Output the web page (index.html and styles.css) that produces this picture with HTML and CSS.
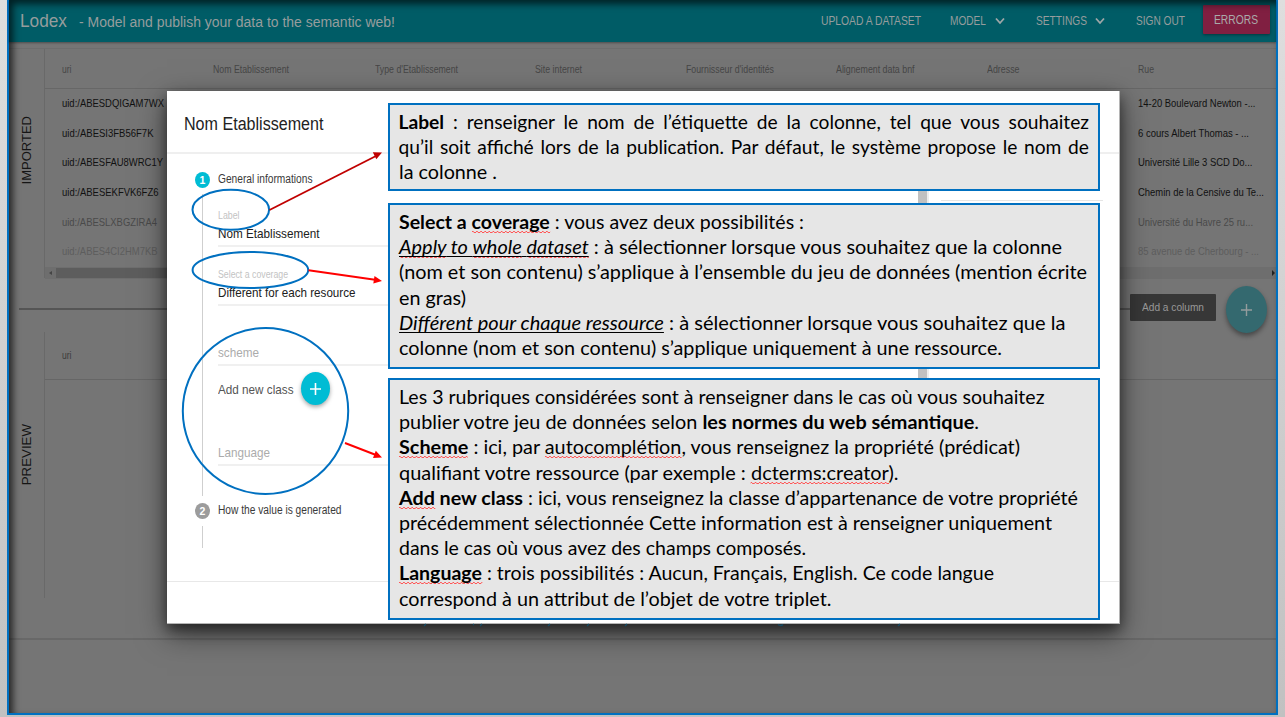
FILE: index.html
```html
<!DOCTYPE html>
<html lang="fr">
<head>
<meta charset="utf-8">
<title>Lodex</title>
<link rel="stylesheet" href="styles.css">
</head>
<body>
<div class="slide">
<div class="frame">
  <header class="topbar">
    <span class="brand"><span data-w="47">Lodex</span></span>
    <span class="tagline"><span data-w="316">- Model and publish your data to the semantic web!</span></span>
    <nav class="nav">
      <span class="nav-upload"><span data-w="100">UPLOAD A DATASET</span></span>
      <span class="nav-model"><span data-w="36">MODEL</span></span>
      <svg class="chevron chevron-model" viewBox="0 0 10 8"><path d="M1 1.5 5 6 9 1.5"/></svg>
      <span class="nav-settings"><span data-w="51">SETTINGS</span></span>
      <svg class="chevron chevron-settings" viewBox="0 0 10 8"><path d="M1 1.5 5 6 9 1.5"/></svg>
      <span class="nav-signout"><span data-w="49">SIGN OUT</span></span>
      <span class="errors"><span data-w="44">ERRORS</span></span>
    </nav>
  </header>
  <section class="imported">
    <div class="side"><span>IMPORTED</span></div>
    <div class="table">
      <div class="row head">
        <span><b data-w="9.5">uri</b></span><span><b data-w="76">Nom Etablissement</b></span><span><b data-w="83">Type d'Etablissement</b></span><span><b data-w="47">Site internet</b></span><span><b data-w="88">Fournisseur d'identités</b></span><span><b data-w="78.5">Alignement data bnf</b></span><span><b data-w="32.5">Adresse</b></span><span><b data-w="16">Rue</b></span>
      </div>
      <div class="row"><span><b data-w="102">uid:/ABESDQIGAM7WX</b></span><span class="last"><b data-w="117.5">14-20 Boulevard Newton -...</b></span></div>
      <div class="row"><span><b data-w="91.5">uid:/ABESI3FB56F7K</b></span><span class="last"><b data-w="111">6 cours Albert Thomas - ...</b></span></div>
      <div class="row"><span><b data-w="101">uid:/ABESFAU8WRC1Y</b></span><span class="last"><b data-w="114.5">Université Lille 3 SCD Do...</b></span></div>
      <div class="row"><span><b data-w="96.5">uid:/ABESEKFVK6FZ6</b></span><span class="last"><b data-w="126">Chemin de la Censive du Te...</b></span></div>
      <div class="row faded"><span><b data-w="95">uid:/ABESLXBGZIRA4</b></span><span class="last"><b data-w="115">Université du Havre 25 ru...</b></span></div>
      <div class="row fainter"><span><b data-w="95.5">uid:/ABES4CI2HM7KB</b></span><span class="last"><b data-w="121">85 avenue de Cherbourg - ...</b></span></div>
      <div class="hscroll"><i class="arrow-left"></i><i class="thumb"></i><i class="arrow-right"></i></div>
    </div>
  </section>
  <div class="separator"></div>
  <section class="preview">
    <div class="side"><span>PREVIEW</span></div>
    <div class="preview-head"><b data-w="9.5">uri</b></div>
  </section>
  <div class="footline"></div>
  <div class="inner-shadow"></div>
</div>

<div class="tooltip"><span data-w="62">Add a column</span></div>
<div class="fab fab-column"><svg viewBox="0 0 11 12"><path d="M5.5 0V12M0 6H11"/></svg></div>

<div class="modal">
  <h1><span data-w="139.5">Nom Etablissement</span></h1>
  <div class="modal-body">
    <div class="step first"><i class="badge">1</i><span data-w="94.5">General informations</span></div>
    <div class="fields">
      <div class="field f-label"><label><span data-w="21.5">Label</span></label><p><span data-w="101.5">Nom Etablissement</span></p></div>
      <div class="field f-cover"><label><span data-w="70">Select a coverage</span></label><p><span data-w="137.5">Different for each resource</span></p></div>
      <div class="field f-scheme"><span data-w="41">scheme</span></div>
      <div class="f-class"><span class="class-text"><span data-w="75.5">Add new class</span></span><div class="fab fab-class"><svg viewBox="0 0 11 12"><path d="M5.5 0V12M0 6H11"/></svg></div></div>
      <div class="field f-lang"><span data-w="52">Language</span></div>
    </div>
    <div class="step second"><i class="badge grey">2</i><span data-w="123.5">How the value is generated</span></div>
    <div class="tail"></div>
  </div>
  <div class="vscroll"></div>
  <div class="rightline"></div>
</div>

<svg class="marks" viewBox="0 0 1285 717">
  <g class="peek"><path d="M426 624l-2 2M474 624l-1 1M482 624l-2 2M550 624l-2 2M589 624l-2 2M627 624l-2 2M778 624.500q3 2 5 0M900 624l-2 2"/></g>
  <g class="rings"><ellipse cx="230.8" cy="209.8" rx="38.3" ry="20"/><ellipse cx="250.4" cy="270" rx="57.8" ry="18"/><ellipse cx="265.5" cy="411" rx="82.7" ry="83"/></g>
  <g class="dark"><path class="shaft" d="M269.500 210 376 156"/><path class="tip" d="M382 152.500 376.300 159.300 372.800 152.200z"/></g>
  <g class="bright"><path class="shaft" d="M308.500 270.200 375 279.800M345 443 376 455"/><path class="tip" d="M382 281 373.300 283.600 374.500 276zM382 457.500 373 458 375.800 450.800z"/></g>
</svg>

<div class="note note1">
  <div><span data-w="690.5" data-mode="justify"><strong>Label</strong> : renseigner le nom de l’étiquette de la colonne, tel que vous souhaitez</span></div>
  <div><span data-w="690.5" data-mode="justify">qu’il soit affiché lors de la publication. Par défaut, le système propose le nom de</span></div>
  <div><span data-w="98">la colonne .</span></div>
</div>
<div class="note note2">
  <div><span data-w="405"><strong>Select a <u class="sp">coverage</u></strong> : vous avez deux possibilités :</span></div>
  <div><span data-w="663"><em><u class="ul"><u class="sp">Apply</u> to <u class="sp">whole</u> <u class="sp">dataset</u></u></em> : à sélectionner lorsque vous souhaitez que la colonne</span></div>
  <div><span data-w="688">(nom et son contenu) s’applique à l’ensemble du jeu de données (mention écrite</span></div>
  <div><span data-w="67">en gras)</span></div>
  <div><span data-w="666.5"><em><u class="ul">Différent pour chaque ressource</u></em> : à sélectionner lorsque vous souhaitez que la</span></div>
  <div><span data-w="603">colonne (nom et son contenu) s’applique uniquement à une ressource.</span></div>
</div>
<div class="note note3">
  <div><span data-w="645.500">Les 3 rubriques considérées sont à renseigner dans le cas où vous souhaitez</span></div>
  <div><span data-w="580">publier votre jeu de données selon <strong>les normes du web sémantique</strong>.</span></div>
  <div><span data-w="621"><strong><u class="sp">Scheme</u></strong> : ici, par <u class="sp">autocomplétion</u>, vous renseignez la propriété (prédicat)</span></div>
  <div><span data-w="499.500">qualifiant votre ressource (par exemple : <u class="sp">dcterms:creator</u>).</span></div>
  <div><span data-w="679"><strong><u class="sp">Add</u> new class</strong> : ici, vous renseignez la classe d’appartenance de votre propriété</span></div>
  <div><span data-w="653">précédemment sélectionnée Cette information est à renseigner uniquement</span></div>
  <div><span data-w="407">dans le cas où vous avez des champs composés.</span></div>
  <div><span data-w="595"><strong><u class="sp">Language</u></strong> : trois possibilités : Aucun, Français, English. Ce code langue</span></div>
  <div><span data-w="432.500">correspond à un attribut de l’objet de votre triplet.</span></div>
</div>
</div>
<script src="fit.js"></script>
</body>
</html>
```
FILE: styles.css
```css
* { box-sizing: border-box; }
body { margin: 0; font-family: "Liberation Sans", Arial, sans-serif; }
b { font-weight: normal; }
i { font-style: normal; }
[data-w] { display: inline-block; white-space: pre; transform-origin: 0 50%; }

.slide { position: relative; width: 1285px; height: 717px; overflow: hidden; background: linear-gradient(#dedede, #c1c1c1); }
.frame { position: relative; width: 1271px; height: 715px; margin-left: 7px; border: solid #0070c0; border-width: 0 2px 2px; background: #757575; }
.inner-shadow { position: absolute; inset: 0; box-shadow: inset 4px 4px 7px rgba(0,0,0,.65); }

.topbar { display: flex; height: 42px; background: #005c66; color: #969c9d; box-shadow: 0 1px 2px rgba(0,0,0,.35); line-height: 42px; white-space: nowrap; }
.brand { width: 59px; margin-left: 11px; font-size: 18.500px; line-height: 41px; }
.tagline { width: 742px; font-size: 15.500px; line-height: 43px; }
.nav { display: flex; font-size: 12px; line-height: 42px; }
.nav-upload { width: 129px; }
.nav-model { width: 45px; }
.nav-settings { width: 59px; }
.nav-signout { width: 67px; }
.chevron { width: 10px; height: 8px; margin-top: 17px; fill: none; stroke: #9fa7a8; stroke-width: 1.800; }
.chevron-model { margin-right: 31px; }
.chevron-settings { margin-right: 31px; }
.errors { width: 67px; height: 29px; margin-top: 5px; padding-left: 11px; border-radius: 1px; background: #801f41; color: #aaa; line-height: 30px; box-shadow: 0 1px 3px rgba(0,0,0,.4); }

.imported { display: flex; height: 230px; margin-top: 6px; border-top: 1px solid #6e6e6e; }
.side { display: flex; align-items: center; justify-content: center; width: 36px; padding-right: 1px; border-right: 1px solid #696969; font-size: 13.300px; color: #151515; }
.side span { writing-mode: vertical-rl; transform: rotate(180deg); }
.imported .side { padding-top: 0; padding-bottom: 26px; font-size: 13px; }
.table { width: 1231px; }
.row { display: grid; grid-template-columns: 151px 161.500px 160px 151px 150.500px 151px 151px 1fr; height: 29.700px; padding-left: 17px; font-size: 11px; line-height: 29px; color: #111; white-space: nowrap; overflow: hidden; }
.row.head { height: 40px; border-bottom: 1px solid #676767; font-size: 10px; line-height: 41px; color: #464646; }
.row .last { grid-column: 8; }
.row.faded { color: #4a4a4a; }
.row.fainter { color: #5d5d5d; }
.hscroll { display: flex; align-items: center; height: 12px; background: #6e6e6e; }
.arrow-left { width: 11px; }
.arrow-left::before { content: ""; display: block; margin-left: 4px; width: 0; border: solid transparent; border-width: 2.500px 3px 2.500px 0; border-right-color: #444; }
.thumb { width: 700px; height: 10px; background: #5d5d5d; }
.arrow-right { margin-left: auto; margin-right: 1px; border: solid transparent; border-width: 3px 0 3px 3px; border-left-color: #222; }
.separator { width: 1190px; height: 2px; margin: 30px 0 0 10px; background: #555; }
.preview { display: flex; height: 266px; margin-top: 22px; }
.preview .side { padding-top: 0; padding-bottom: 20px; }
.preview-head { flex: 1; height: 48px; padding-left: 17px; border-bottom: 1px solid #666; font-size: 10px; line-height: 48px; color: #3c3c3c; }
.footline { height: 2px; margin-top: 40px; background: #686868; }

.tooltip { position: absolute; left: 1130px; top: 294px; width: 86px; height: 27px; padding-left: 12px; border-radius: 1px; background: #373737; color: #999; font-size: 11.500px; line-height: 27px; }
.fab { display: flex; align-items: center; justify-content: center; border-radius: 50%; }
.fab svg { fill: none; stroke: #fff; stroke-width: 1.600; }
.fab-column { position: absolute; left: 1226px; top: 286px; width: 41px; height: 47px; background: #34696f; box-shadow: 0 3px 5px rgba(0,0,0,.4); }
.fab-column svg { width: 11px; height: 12px; stroke: #949c9d; stroke-width: 1.400; }

.modal { position: absolute; left: 167px; top: 91px; width: 953px; height: 533px; border: solid #b5b5b5; border-width: 0 1px 1px 0; background: #fff; box-shadow: 0 10px 28px rgba(0,0,0,.5), 0 6px 12px rgba(0,0,0,.45); }
.modal h1 { height: 63px; margin: 0; padding-left: 17px; border-bottom: 2px solid #efefef; font-size: 17.500px; font-weight: normal; line-height: 67px; color: #222; }
.modal-body { height: 428px; padding: 17px 0 0 28px; border-bottom: 1px solid #e8e8e8; }
.step { display: flex; align-items: center; gap: 7.500px; height: 17px; font-size: 12px; line-height: 17px; color: #3a3a3a; }
.badge { flex: none; width: 15px; height: 16px; border-radius: 50%; background: #00bcd4; color: #fff; font-size: 10.500px; font-weight: bold; line-height: 16.500px; text-align: center; }
.badge.grey { background: #9c9c9c; }
.fields { height: 302px; margin: 6px 0 6px 7px; padding-left: 15px; border-left: 1px solid #cfcfcf; white-space: nowrap; }
.field { width: 680px; border-bottom: 2px solid #f0f0f0; }
.field label, .field p { display: block; margin: 0; }
.f-label { height: 53px; padding-top: 14px; }
.f-label label, .f-cover label { height: 16px; font-size: 10px; line-height: 16px; color: #c3c3c3; }
.f-label p, .f-cover p { height: 20px; font-size: 13px; line-height: 20px; color: #202020; }
.f-cover { height: 59px; padding-top: 20px; }
.f-cover p { line-height: 19px; }
.f-scheme { height: 60px; padding-top: 37px; font-size: 13.500px; line-height: 20px; color: #ababab; }
.f-class { display: flex; padding-top: 6px; height: 47px; }
.class-text { width: 83px; font-size: 13.500px; line-height: 35px; color: #555; }
.fab-class { width: 29px; height: 33px; background: #00bcd4; box-shadow: 0 2px 4px rgba(0,0,0,.35); }
.fab-class svg { width: 11px; height: 12px; }
.f-lang { height: 53px; padding-top: 30px; font-size: 13.500px; line-height: 20px; color: #ababab; }
.tail { width: 1px; height: 22px; margin: 7px 0 0 7px; background: #cfcfcf; }
.vscroll { position: absolute; left: 751px; top: 90px; width: 11px; height: 250px; border-right: 2px solid #eee; background: #c1c1c1; }
.rightline { position: absolute; left: 774px; top: 109px; width: 162px; height: 1px; background: #e6e6e6; }

.marks { position: absolute; left: 0; top: 0; width: 1285px; height: 717px; fill: none; }
.peek { stroke: #124b66; stroke-width: 1.300; }
.rings { stroke: #0070c0; stroke-width: 2; }
.shaft { stroke-width: 1.900; }
.dark { stroke: #c00000; }
.bright { stroke: #ff0000; }
.tip { stroke: none; }
.dark .tip { fill: #c00000; }
.bright .tip { fill: #ff0000; }

.note { position: absolute; left: 388px; width: 712px; padding: 4px 0 0 8.500px; border: 2px solid #0070c0; background: #e6e6e6; color: #000; font-family: Lato, Carlito, sans-serif; font-size: 19px; line-height: 25.200px; }
.note > div { height: 25.200px; }
.note1 { top: 103px; height: 88px; font-size: 19.200px; }
.note2 { top: 203px; height: 166px; }
.note3 { top: 378px; height: 242px; }
.note u { text-decoration: none; }
.note .ul { text-decoration: underline; text-decoration-thickness: 1px; text-underline-offset: 2px; text-decoration-skip-ink: none; }
.note .sp {
  background-image: linear-gradient(90deg, #f55 50%, transparent 50%), linear-gradient(90deg, transparent 50%, #f55 50%);
  background-size: 4px 1px, 4px 1px;
  background-position: 0 calc(100% - 1px), 0 100%;
  background-repeat: repeat-x;
}
```
FILE: fit.js
```javascript
// Fits every text run to the width given in its data-w attribute.
document.querySelectorAll('[data-w]').forEach(function (el) {
  var target = parseFloat(el.dataset.w);
  var natural = el.getBoundingClientRect().width;
  if (el.dataset.mode === 'justify') {
    var gaps = el.textContent.split(' ').length - 1;
    el.style.wordSpacing = (target - natural) / gaps + 'px';
  } else {
    el.style.transform = 'scaleX(' + target / natural + ')';
  }
});
```
